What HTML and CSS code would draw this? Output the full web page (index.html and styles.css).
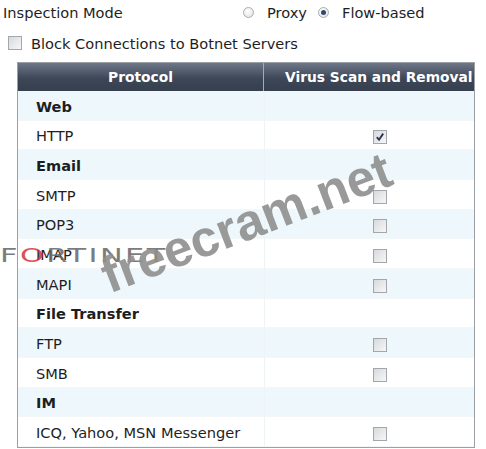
FILE: index.html
```html
<!DOCTYPE html>
<html lang="en">

<head>
    <meta charset="UTF-8">
    <title>AntiVirus Profile</title>
    <link rel="stylesheet" href="styles.css">
</head>

<body>
    <div class="mode-row">
        <span class="mode-label">Inspection Mode</span>
        <span class="radio-opt"><span class="radio"></span>Proxy</span>
        <span class="radio-opt"><span class="radio on"></span>Flow-based</span>
    </div>

    <div class="botnet-row">
        <span class="box"></span>
        <span>Block Connections to Botnet Servers</span>
    </div>

    <table class="av-table">
        <thead>
            <tr>
                <th class="col-proto">Protocol</th>
                <th class="col-scan">Virus Scan and Removal</th>
            </tr>
        </thead>
        <tbody>
            <tr class="group"><td>Web</td><td></td></tr>
            <tr><td>HTTP</td><td class="chk"><span class="box checked"><svg viewBox="0 0 14 14" width="14" height="14"><path d="M3.8 7.2 L6 9.8 L10.2 3.6" fill="none" stroke="#2a3550" stroke-width="1.9"/></svg></span></td></tr>
            <tr class="group"><td>Email</td><td></td></tr>
            <tr><td>SMTP</td><td class="chk"><span class="box"></span></td></tr>
            <tr><td>POP3</td><td class="chk"><span class="box"></span></td></tr>
            <tr><td>IMAP</td><td class="chk"><span class="box"></span></td></tr>
            <tr><td>MAPI</td><td class="chk"><span class="box"></span></td></tr>
            <tr class="group"><td>File Transfer</td><td></td></tr>
            <tr><td>FTP</td><td class="chk"><span class="box"></span></td></tr>
            <tr><td>SMB</td><td class="chk"><span class="box"></span></td></tr>
            <tr class="group"><td>IM</td><td></td></tr>
            <tr><td>ICQ, Yahoo, MSN Messenger</td><td class="chk"><span class="box"></span></td></tr>
        </tbody>
    </table>

    <!-- watermarks over the screenshot -->
    <div class="mark-logo">F<span class="red">O</span>RTINET</div>
    <div class="mark-site">freecram.net</div>
</body>

</html>
```

FILE: styles.css
```css
body {
    margin: 0;
    padding: 0;
    background-color: white;
    font-family: 'DejaVu Sans', Verdana, sans-serif;
    font-size: 14.6px;
    color: #1e1e1e;
    position: relative;
    height: 449px;
    overflow: hidden;
}

.mode-row {
    display: flex;
    align-items: center;
    height: 24px;
    padding-left: 3px;
}

.mode-label {
    width: 240px;
}

.radio-opt {
    display: flex;
    align-items: center;
    gap: 13px;
    margin-right: 11px;
}

.radio {
    width: 11px;
    height: 11px;
    border-radius: 50%;
    border: 1px solid #a9adb2;
    background: radial-gradient(circle at 40% 35%, #ffffff, #dcdfe2);
    box-sizing: border-box;
    position: relative;
}

.radio.on::after {
    content: "";
    position: absolute;
    left: 2px;
    top: 2px;
    width: 5px;
    height: 5px;
    border-radius: 50%;
    background: #2f4a68;
}

.botnet-row {
    display: flex;
    align-items: center;
    gap: 9px;
    height: 38px;
    padding-left: 8px;
}

.box {
    display: inline-block;
    width: 14px;
    height: 14px;
    border: 1px solid #a3a6aa;
    box-sizing: border-box;
    background: linear-gradient(135deg, #d6d9dc, #f7f7f7);
    vertical-align: middle;
    position: relative;
}

.box svg {
    position: absolute;
    left: -1px;
    top: -1px;
}

.av-table {
    margin-left: 17px;
    width: 458px;
    border: 1px solid #9ba0a6;
    border-spacing: 0;
    table-layout: fixed;
}

.av-table th {
    height: 28px;
    padding: 0;
    color: white;
    font-size: 13.8px;
    font-weight: bold;
    background: linear-gradient(#6d7787, #3d4757 55%, #353f4e);
    white-space: nowrap;
    overflow: hidden;
}

.av-table .col-proto {
    width: 245px;
    border-right: 1px solid #a6acb4;
    text-align: center;
}

.av-table .col-scan {
    text-align: left;
    padding-left: 21px;
}

.av-table td {
    height: 29.67px;
    padding: 2px 0 0 18px;
    border-bottom: 1px solid #f4f7f8;
    box-sizing: border-box;
}

.av-table td + td {
    border-left: 1px solid #eef3f5;
}

.av-table tbody tr:nth-child(odd) td {
    background-color: #eef8fc;
}

.av-table .group td:first-child {
    font-weight: bold;
}

.av-table td.chk {
    padding-left: 108px;
}

.mark-logo {
    position: absolute;
    left: 0;
    top: 244px;
    font-family: 'DejaVu Sans', sans-serif;
    font-size: 19px;
    letter-spacing: 1.5px;
    color: #666;
    opacity: 0.85;
    transform: scaleX(1.6);
    transform-origin: left center;
}

.mark-logo .red {
    color: #d8303a;
}

.mark-site {
    position: absolute;
    left: 93px;
    top: 193px;
    font-family: 'Liberation Sans', Arial, sans-serif;
    font-weight: bold;
    font-size: 51px;
    color: #8f8f8f;
    opacity: 0.9;
    transform: rotate(-21deg);
    white-space: nowrap;
}
```
